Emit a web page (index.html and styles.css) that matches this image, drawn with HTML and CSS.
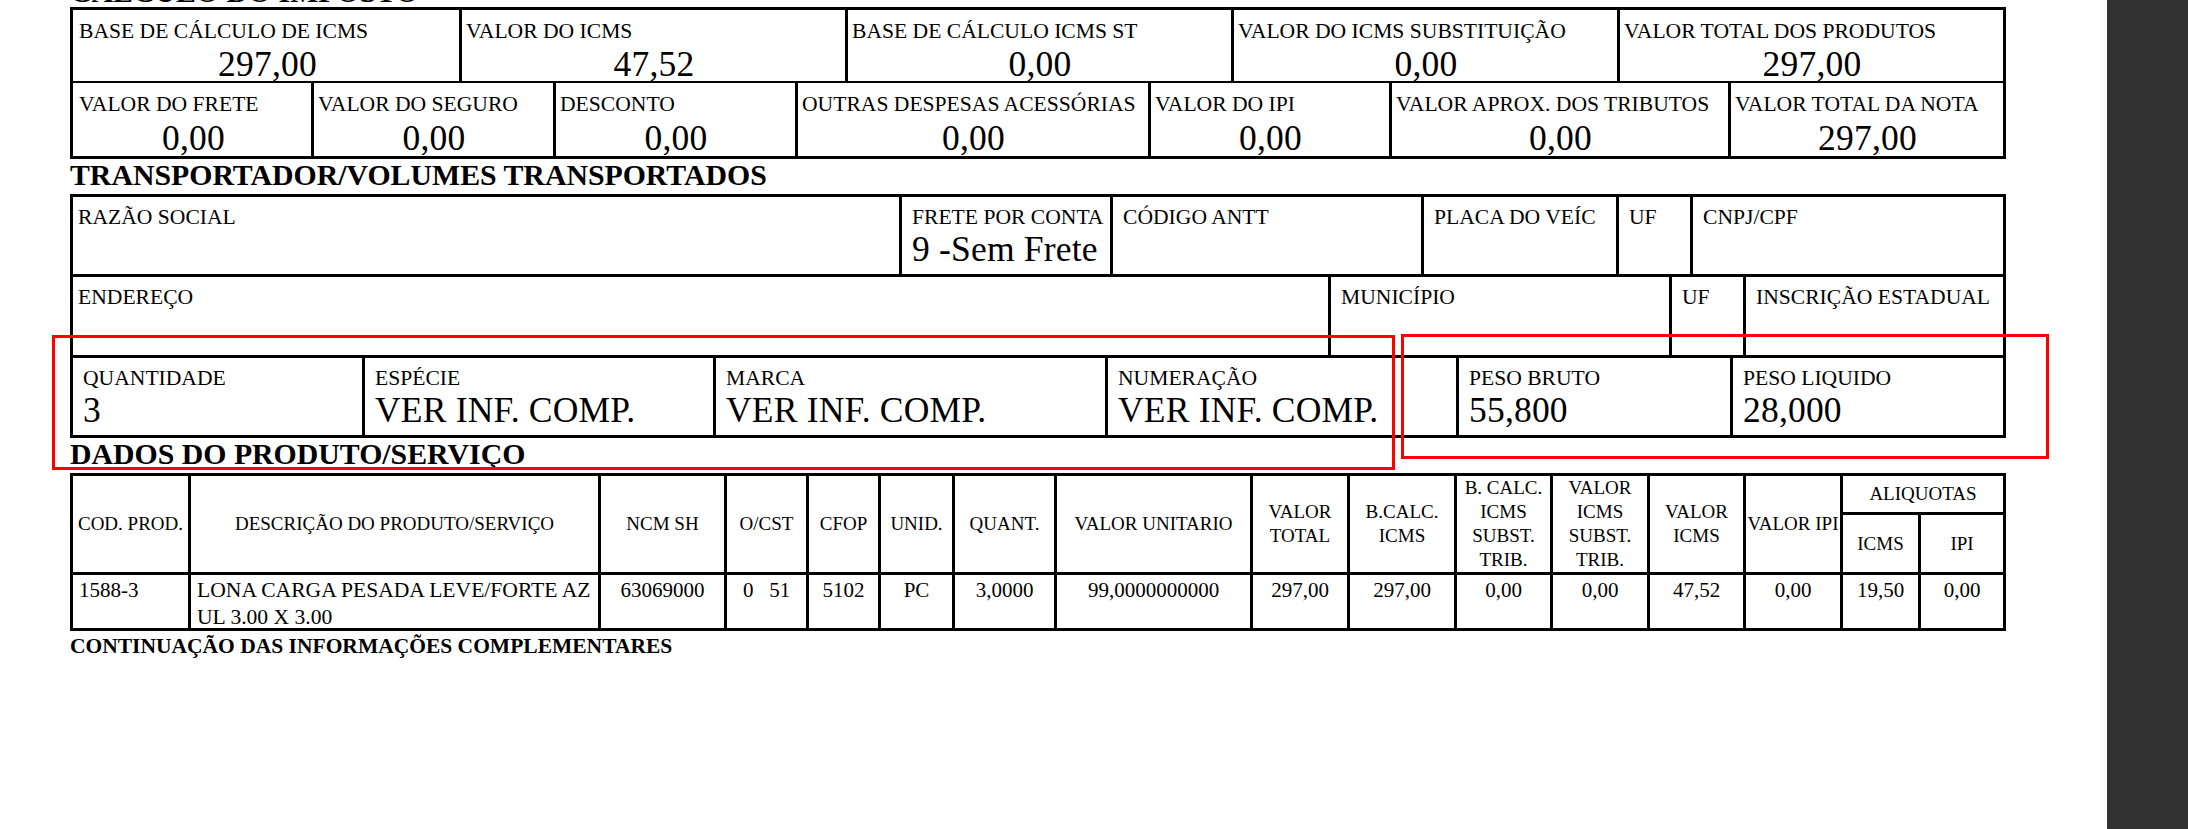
FILE: index.html
```html
<!DOCTYPE html>
<html lang="pt-BR">
<head>
<meta charset="utf-8">
<title>DANFE</title>
<link rel="stylesheet" href="styles.css">
</head>
<body>
<div class="page">
  <div class="doc">
    <div class="sec-title sec-title--clip">CÁLCULO DO IMPOSTO</div>
    <div class="box">
      <div class="row r-imp1 imp">
        <div class="cell first"><div class="lbl">BASE DE CÁLCULO DE ICMS</div><div class="val">297,00</div></div>
        <div class="cell"><div class="lbl">VALOR DO ICMS</div><div class="val">47,52</div></div>
        <div class="cell"><div class="lbl">BASE DE CÁLCULO ICMS ST</div><div class="val">0,00</div></div>
        <div class="cell"><div class="lbl">VALOR DO ICMS SUBSTITUIÇÃO</div><div class="val">0,00</div></div>
        <div class="cell"><div class="lbl">VALOR TOTAL DOS PRODUTOS</div><div class="val">297,00</div></div>
      </div>
      <div class="row r-imp2 imp">
        <div class="cell first"><div class="lbl">VALOR DO FRETE</div><div class="val">0,00</div></div>
        <div class="cell"><div class="lbl">VALOR DO SEGURO</div><div class="val">0,00</div></div>
        <div class="cell"><div class="lbl">DESCONTO</div><div class="val">0,00</div></div>
        <div class="cell"><div class="lbl">OUTRAS DESPESAS ACESSÓRIAS</div><div class="val">0,00</div></div>
        <div class="cell"><div class="lbl">VALOR DO IPI</div><div class="val">0,00</div></div>
        <div class="cell"><div class="lbl">VALOR APROX. DOS TRIBUTOS</div><div class="val">0,00</div></div>
        <div class="cell"><div class="lbl">VALOR TOTAL DA NOTA</div><div class="val">297,00</div></div>
      </div>
    </div>

    <div class="sec-title">TRANSPORTADOR/VOLUMES TRANSPORTADOS</div>
    <div class="box">
      <div class="row r-tr1 tr">
        <div class="cell first"><div class="lbl">RAZÃO SOCIAL</div></div>
        <div class="cell"><div class="lbl">FRETE POR CONTA</div><div class="val">9 -Sem Frete</div></div>
        <div class="cell"><div class="lbl">CÓDIGO ANTT</div></div>
        <div class="cell"><div class="lbl">PLACA DO VEÍC</div></div>
        <div class="cell"><div class="lbl">UF</div></div>
        <div class="cell"><div class="lbl">CNPJ/CPF</div></div>
      </div>
      <div class="row r-tr2 tr">
        <div class="cell first"><div class="lbl">ENDEREÇO</div></div>
        <div class="cell"><div class="lbl">MUNICÍPIO</div></div>
        <div class="cell"><div class="lbl">UF</div></div>
        <div class="cell"><div class="lbl">INSCRIÇÃO ESTADUAL</div></div>
      </div>
      <div class="row r-tr3 tr">
        <div class="cell"><div class="lbl">QUANTIDADE</div><div class="val">3</div></div>
        <div class="cell"><div class="lbl">ESPÉCIE</div><div class="val">VER INF. COMP.</div></div>
        <div class="cell"><div class="lbl">MARCA</div><div class="val">VER INF. COMP.</div></div>
        <div class="cell"><div class="lbl">NUMERAÇÃO</div><div class="val">VER INF. COMP.</div></div>
        <div class="cell"><div class="lbl">PESO BRUTO</div><div class="val">55,800</div></div>
        <div class="cell"><div class="lbl">PESO LIQUIDO</div><div class="val">28,000</div></div>
      </div>
    </div>

    <div class="sec-title">DADOS DO PRODUTO/SERVIÇO</div>
    <div class="prod">
      <div class="ph">COD. PROD.</div>
      <div class="ph">DESCRIÇÃO DO PRODUTO/SERVIÇO</div>
      <div class="ph">NCM SH</div>
      <div class="ph">O/CST</div>
      <div class="ph">CFOP</div>
      <div class="ph">UNID.</div>
      <div class="ph">QUANT.</div>
      <div class="ph">VALOR UNITARIO</div>
      <div class="ph">VALOR TOTAL</div>
      <div class="ph">B.CALC. ICMS</div>
      <div class="ph">B. CALC. ICMS SUBST. TRIB.</div>
      <div class="ph">VALOR ICMS SUBST. TRIB.</div>
      <div class="ph">VALOR ICMS</div>
      <div class="ph ph-nowrap">VALOR IPI</div>
      <div class="ph ph-group">ALIQUOTAS</div>
      <div class="ph ph-sub">ICMS</div>
      <div class="ph ph-sub">IPI</div>

      <div class="pd left">1588-3</div>
      <div class="pd left wrap">LONA CARGA PESADA LEVE/FORTE AZUL 3.00 X 3.00</div>
      <div class="pd">63069000</div>
      <div class="pd">0 &nbsp; 51</div>
      <div class="pd">5102</div>
      <div class="pd">PC</div>
      <div class="pd">3,0000</div>
      <div class="pd">99,0000000000</div>
      <div class="pd">297,00</div>
      <div class="pd">297,00</div>
      <div class="pd">0,00</div>
      <div class="pd">0,00</div>
      <div class="pd">47,52</div>
      <div class="pd">0,00</div>
      <div class="pd">19,50</div>
      <div class="pd">0,00</div>
    </div>

    <div class="cont-title">CONTINUAÇÃO DAS INFORMAÇÕES COMPLEMENTARES</div>
  </div>

  <div class="annot annot--left"></div>
  <div class="annot annot--right"></div>
</div>
<div class="sidebar"></div>
</body>
</html>
```

FILE: styles.css
```css
* { box-sizing: border-box; }

html, body {
  margin: 0;
  padding: 0;
  height: 100%;
}

body {
  display: flex;
  background: #fff;
  overflow: hidden;
  font-family: "Liberation Serif", "Times New Roman", serif;
  color: #000;
}

.page {
  position: relative;
  flex: 1;
  background: #fff;
}

.sidebar {
  width: 81px;
  flex: none;
  background: #323232;
}

.doc {
  padding-left: 70px;
}

.sec-title {
  font-weight: bold;
  font-size: 29.8px;
  line-height: 32px;
  height: 35px;
  white-space: nowrap;
}

.sec-title--clip {
  margin-top: -24px;
  height: 31px;
}

.box {
  width: 1936px;
  background: #000;
  padding: 3px;
  display: flex;
  flex-direction: column;
  gap: 3px;
}

.row {
  display: grid;
  gap: 3px;
}

.r-imp1 { grid-template-columns: 386px repeat(4, 383px); height: 70px; }
.r-imp2 { grid-template-columns: 238px 239px 239px 350px 238px 336px 272px; height: 73px; }
.r-tr1 { grid-template-columns: 826px 208px 308px 192px 71px 310px; height: 77px; }
.r-tr2 { grid-template-columns: 1255px 338px 71px 257px; height: 78px; }
.r-tr3 { grid-template-columns: 289px 348px 389px 348px 271px 270px; height: 77px; }

.cell {
  background: #fff;
  white-space: nowrap;
  min-width: 0;
}

.lbl {
  font-size: 21.6px;
  line-height: 24px;
}

.val {
  font-size: 35.5px;
  line-height: 34px;
  letter-spacing: 0.2px;
}

.imp .cell {
  padding: 9px 3px 0 4px;
}
.imp .cell.first { padding-left: 6px; }
.imp .val {
  margin-top: 4px;
  text-align: center;
}
.r-imp2 .val {
  margin-top: 5px;
}

.tr .cell {
  padding: 8px 10px 0 10px;
}
.tr .cell.first { padding-left: 5px; }
.tr .val {
  margin-top: 3px;
}

.prod {
  width: 1936px;
  background: #000;
  padding: 3px;
  display: grid;
  gap: 3px;
  grid-template-columns: 115px 407px 123px 79px 69px 71px 99px 193px 94px 104px 93px 94px 93px 94px 75px 82px;
  grid-template-rows: 36px 57px 53px;
}

.ph {
  grid-row: span 2;
  background: #fff;
  display: flex;
  align-items: center;
  justify-content: center;
  text-align: center;
  font-size: 19px;
  line-height: 24px;
}

.ph-nowrap {
  white-space: nowrap;
}

.ph-group {
  grid-row: span 1;
  grid-column: span 2;
}

.ph-sub {
  grid-row: span 1;
}

.pd {
  background: #fff;
  font-size: 21px;
  line-height: 27px;
  padding: 2px 0 0 0;
  text-align: center;
  white-space: nowrap;
}

.pd.left {
  text-align: left;
  padding-left: 6px;
}

.pd.wrap {
  font-size: 21.6px;
  white-space: normal;
  word-break: break-all;
}

.cont-title {
  margin-top: 3px;
  font-weight: bold;
  font-size: 21.5px;
  line-height: 24px;
  white-space: nowrap;
}

.annot {
  position: absolute;
  border: 3px solid #ff0000;
}

.annot--left {
  left: 52px;
  top: 335px;
  width: 1343px;
  height: 135px;
}

.annot--right {
  left: 1401px;
  top: 334px;
  width: 648px;
  height: 125px;
}
```
